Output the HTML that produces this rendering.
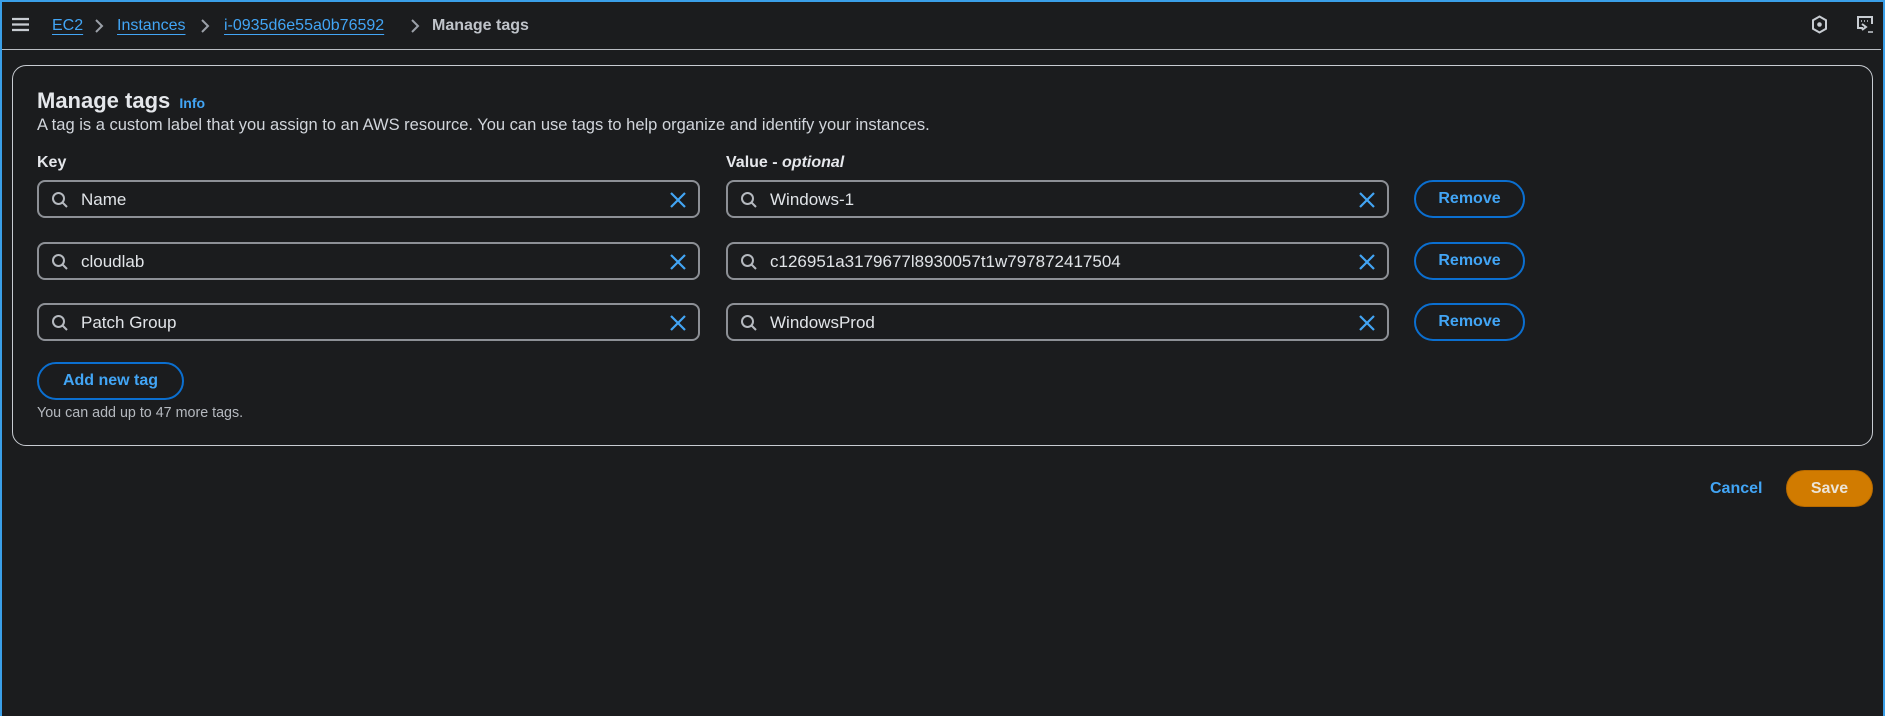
<!DOCTYPE html>
<html><head><meta charset="utf-8"><style>
*{box-sizing:border-box;margin:0;padding:0}
html,body{width:1885px;height:716px;overflow:hidden;background:#1b1c1e;font-family:"Liberation Sans",sans-serif;color:#d1d5db}
#frame{position:absolute;left:0;top:0;width:1885px;height:716px;border:2px solid #3a9fe8;border-bottom:none}
.abs{position:absolute}
.crumb{top:17px;font-size:16px;white-space:nowrap}
.lnk{color:#42a5f5;text-decoration:underline;text-underline-offset:4px}
#topline{left:2px;top:49px;width:1879px;height:1px;background:#b8bcc2}
#box{left:12px;top:65px;width:1861px;height:381px;border:1px solid #c8ccd2;border-radius:14px}
h1{position:absolute;left:37px;top:88px;font-size:22px;font-weight:bold;color:#e5e7eb}
.lbl{font-size:16px;font-weight:bold;color:#e5e7eb;top:154px}
.inp{position:absolute;height:38px;border:2px solid #8d9096;border-radius:8px;font-size:17px;color:#e1e4e8;padding-left:42px;line-height:36px}
.inp svg.s{position:absolute;left:12px;top:9px}
.inp svg.x{position:absolute;right:12px;top:10px}
.btn{position:absolute;height:38px;border:2px solid #0b6fd0;border-radius:19px;color:#42a5f5;font-weight:bold;font-size:16px;text-align:center;line-height:34px}
</style></head><body>
<div id="frame"></div>
<svg class="abs" style="left:12px;top:17px" width="17" height="15"><g stroke="#c8ccd2" stroke-width="2.2"><line x1="0" y1="2" x2="17" y2="2"/><line x1="0" y1="7.5" x2="17" y2="7.5"/><line x1="0" y1="13" x2="17" y2="13"/></g></svg>
<div class="abs crumb lnk" style="left:52px">EC2</div>
<svg class="abs" style="left:94px;top:19px" width="10" height="14"><path d="M2 1l6 6-6 6" stroke="#9ba0a8" stroke-width="2" fill="none"/></svg>
<div class="abs crumb lnk" style="left:117px">Instances</div>
<svg class="abs" style="left:200px;top:19px" width="10" height="14"><path d="M2 1l6 6-6 6" stroke="#9ba0a8" stroke-width="2" fill="none"/></svg>
<div class="abs crumb lnk" style="left:224px">i-0935d6e55a0b76592</div>
<svg class="abs" style="left:410px;top:19px" width="10" height="14"><path d="M2 1l6 6-6 6" stroke="#9ba0a8" stroke-width="2" fill="none"/></svg>
<div class="abs crumb" style="left:432px;color:#bfc3c9;font-weight:bold">Manage tags</div>
<svg class="abs" style="left:1811px;top:15px" width="17" height="19" viewBox="0 0 17 19"><path d="M8.5 1.5l6.5 3.7v8.6l-6.5 3.7-6.5-3.7V5.2z" fill="none" stroke="#c8ccd2" stroke-width="2"/><circle cx="8.5" cy="9.5" r="2.3" fill="#c8ccd2"/></svg>
<svg class="abs" style="left:1856px;top:15px" width="18" height="20" viewBox="0 0 18 20"><path d="M7 13H2V2h14v7" fill="none" stroke="#c8ccd2" stroke-width="2"/><path d="M5 6h1M8 6h1M11 6h1" stroke="#c8ccd2" stroke-width="1.5"/><path d="M6 9l4 3-4 3" fill="none" stroke="#c8ccd2" stroke-width="2"/><path d="M12 17h5" stroke="#c8ccd2" stroke-width="1.5"/></svg>
<div id="topline" class="abs"></div>
<div id="box" class="abs"></div>
<h1>Manage tags <span style="font-size:14px;color:#42a5f5;margin-left:3px">Info</span></h1>
<div class="abs" style="left:37px;top:116px;font-size:16.5px;color:#d1d5db;white-space:nowrap">A tag is a custom label that you assign to an AWS resource. You can use tags to help organize and identify your instances.</div>
<div class="abs lbl" style="left:37px">Key</div>
<div class="abs lbl" style="left:726px">Value - <i>optional</i></div>

<div class="inp" style="left:37px;top:180px;width:663px"><svg class="s" width="18" height="18"><circle cx="7.5" cy="7.5" r="5.5" stroke="#b5b9bf" stroke-width="2" fill="none"/><line x1="11.5" y1="11.5" x2="16" y2="16" stroke="#b5b9bf" stroke-width="2"/></svg>Name<svg class="x" width="16" height="16"><path d="M1 1l14 14M15 1L1 15" stroke="#42a5f5" stroke-width="2.2"/></svg></div>
<div class="inp" style="left:726px;top:180px;width:663px"><svg class="s" width="18" height="18"><circle cx="7.5" cy="7.5" r="5.5" stroke="#b5b9bf" stroke-width="2" fill="none"/><line x1="11.5" y1="11.5" x2="16" y2="16" stroke="#b5b9bf" stroke-width="2"/></svg>Windows-1<svg class="x" width="16" height="16"><path d="M1 1l14 14M15 1L1 15" stroke="#42a5f5" stroke-width="2.2"/></svg></div>
<div class="btn" style="left:1414px;top:180px;width:111px">Remove</div>

<div class="inp" style="left:37px;top:242px;width:663px"><svg class="s" width="18" height="18"><circle cx="7.5" cy="7.5" r="5.5" stroke="#b5b9bf" stroke-width="2" fill="none"/><line x1="11.5" y1="11.5" x2="16" y2="16" stroke="#b5b9bf" stroke-width="2"/></svg>cloudlab<svg class="x" width="16" height="16"><path d="M1 1l14 14M15 1L1 15" stroke="#42a5f5" stroke-width="2.2"/></svg></div>
<div class="inp" style="left:726px;top:242px;width:663px"><svg class="s" width="18" height="18"><circle cx="7.5" cy="7.5" r="5.5" stroke="#b5b9bf" stroke-width="2" fill="none"/><line x1="11.5" y1="11.5" x2="16" y2="16" stroke="#b5b9bf" stroke-width="2"/></svg>c126951a3179677l8930057t1w797872417504<svg class="x" width="16" height="16"><path d="M1 1l14 14M15 1L1 15" stroke="#42a5f5" stroke-width="2.2"/></svg></div>
<div class="btn" style="left:1414px;top:242px;width:111px">Remove</div>

<div class="inp" style="left:37px;top:303px;width:663px"><svg class="s" width="18" height="18"><circle cx="7.5" cy="7.5" r="5.5" stroke="#b5b9bf" stroke-width="2" fill="none"/><line x1="11.5" y1="11.5" x2="16" y2="16" stroke="#b5b9bf" stroke-width="2"/></svg>Patch Group<svg class="x" width="16" height="16"><path d="M1 1l14 14M15 1L1 15" stroke="#42a5f5" stroke-width="2.2"/></svg></div>
<div class="inp" style="left:726px;top:303px;width:663px"><svg class="s" width="18" height="18"><circle cx="7.5" cy="7.5" r="5.5" stroke="#b5b9bf" stroke-width="2" fill="none"/><line x1="11.5" y1="11.5" x2="16" y2="16" stroke="#b5b9bf" stroke-width="2"/></svg>WindowsProd<svg class="x" width="16" height="16"><path d="M1 1l14 14M15 1L1 15" stroke="#42a5f5" stroke-width="2.2"/></svg></div>
<div class="btn" style="left:1414px;top:303px;width:111px">Remove</div>

<div class="btn" style="left:37px;top:362px;width:147px">Add new tag</div>
<div class="abs" style="left:37px;top:405px;font-size:14.3px;color:#b5b9bf">You can add up to 47 more tags.</div>

<div class="abs" style="left:1710px;top:480px;font-size:16px;font-weight:bold;color:#42a5f5">Cancel</div>
<div class="abs" style="left:1786px;top:470px;width:87px;height:37px;border-radius:19px;background:#d17b00;border:1px solid #b86a00;color:#ece4d6;font-weight:bold;font-size:16px;text-align:center;line-height:35px">Save</div>
</body></html>
